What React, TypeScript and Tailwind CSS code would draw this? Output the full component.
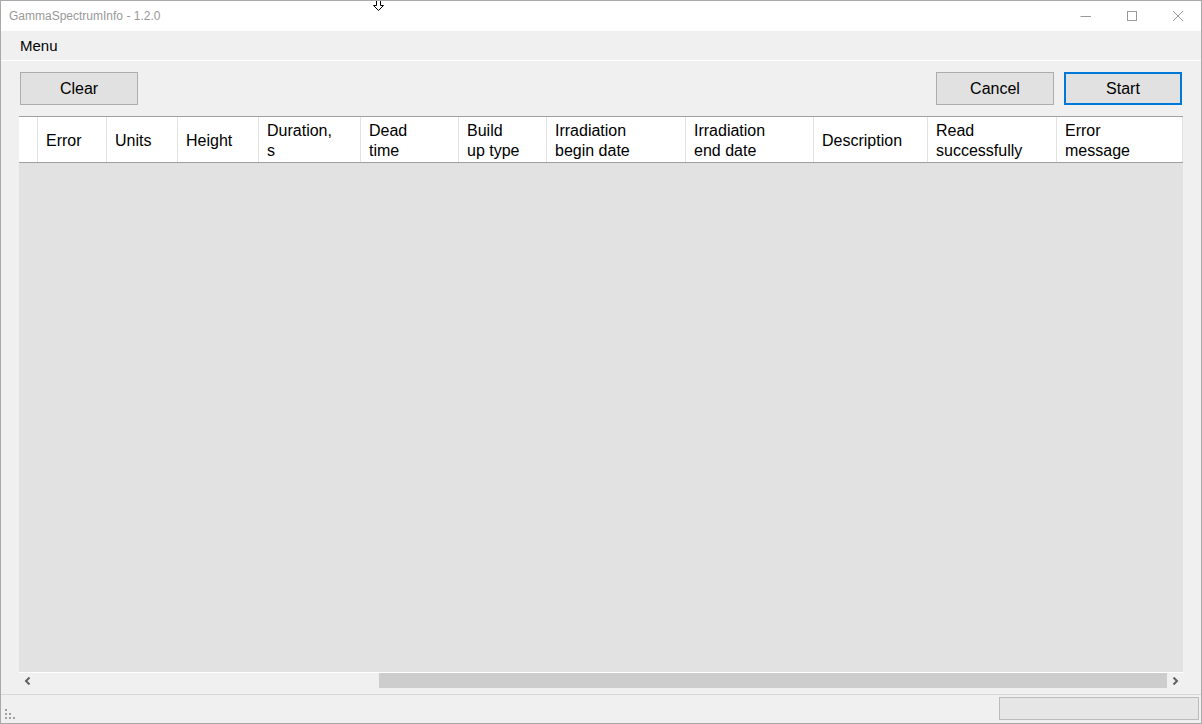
import React from "react";

const cols: { w: number; lines: string[] }[] = [
  { w: 69, lines: ["Error"] },
  { w: 71, lines: ["Units"] },
  { w: 81, lines: ["Height"] },
  { w: 102, lines: ["Duration,", "s"] },
  { w: 98, lines: ["Dead", "time"] },
  { w: 88, lines: ["Build", "up type"] },
  { w: 139, lines: ["Irradiation", "begin date"] },
  { w: 128, lines: ["Irradiation", "end date"] },
  { w: 114, lines: ["Description"] },
  { w: 129, lines: ["Read", "successfully"] },
  { w: 126, lines: ["Error", "message"] },
];

const font = { fontFamily: '"Liberation Sans", Arial, sans-serif' };

export default function App() {
  return (
    <div
      className="relative w-[1202px] h-[724px] border border-[#a9a9a9] bg-[#f0f0f0] flex flex-col overflow-hidden text-black"
      style={font}
    >
      {/* Title bar */}
      <div className="h-[30px] bg-white flex items-center shrink-0 relative">
        <span className="pl-[8px] text-[12px] text-[#999999] leading-none">GammaSpectrumInfo - 1.2.0</span>
        <div className="ml-auto flex items-center h-full">
          <div className="w-[46px] h-full flex items-center justify-center">
            <svg width="12" height="12" viewBox="0 0 12 12">
              <line x1="0.5" y1="6.5" x2="11" y2="6.5" stroke="#9a9a9a" strokeWidth="1" />
            </svg>
          </div>
          <div className="w-[46px] h-full flex items-center justify-center">
            <svg width="12" height="12" viewBox="0 0 12 12">
              <rect x="1.5" y="1.5" width="9" height="9" fill="none" stroke="#9a9a9a" strokeWidth="1" />
            </svg>
          </div>
          <div className="w-[46px] h-full flex items-center justify-center">
            <svg width="12" height="12" viewBox="0 0 12 12">
              <path d="M1 1 L11 11 M11 1 L1 11" stroke="#9a9a9a" strokeWidth="1" />
            </svg>
          </div>
        </div>
        {/* mouse cursor */}
        <svg className="absolute left-[371px] top-[-1px]" width="13" height="12" viewBox="0 0 13 12">
          <path
            d="M4.5 0.5 H8.5 V5.5 H11.5 L6.5 10.5 L1.5 5.5 H4.5 Z"
            fill="white"
            stroke="black"
            strokeWidth="1"
          />
        </svg>
      </div>

      {/* Menu strip */}
      <div className="h-[29px] bg-[#f0f0f0] flex items-center shrink-0">
        <span className="pl-[19px] text-[15px] leading-none">Menu</span>
      </div>
      <div className="h-px bg-white shrink-0" />

      {/* Body */}
      <div className="flex flex-col pt-[11px] pb-[5px] shrink-0 h-[633px]">
        <div className="flex items-center pl-[19px] pr-[19px] h-[33px] shrink-0">
          <button className="w-[118px] h-[33px] bg-[#e1e1e1] border border-[#adadad] text-[16px] flex items-center justify-center">
            Clear
          </button>
          <div className="flex-1" />
          <button className="w-[118px] h-[33px] bg-[#e1e1e1] border border-[#adadad] text-[16px] flex items-center justify-center">
            Cancel
          </button>
          <button className="ml-[10px] w-[118px] h-[33px] bg-[#e1e1e1] border-2 border-[#0078d7] text-[16px] flex items-center justify-center">
            Start
          </button>
        </div>

        {/* Grid */}
        <div className="mt-[11px] ml-[18px] w-[1164px] h-[573px] flex flex-col shrink-0">
          <div className="h-[47px] border-t border-b border-[#a0a0a0] bg-white flex shrink-0">
            <div className="w-[19px] h-full border-r border-[#e3e3e3] shrink-0" />
            {cols.map((c, i) => (
              <div
                key={i}
                className="h-full border-r border-[#e3e3e3] shrink-0 flex flex-col justify-center pl-[8px] pt-[2px] text-[16px] leading-[20px]"
                style={{ width: c.w }}
              >
                {c.lines.map((l, j) => (
                  <span key={j} className="whitespace-nowrap">
                    {l}
                  </span>
                ))}
              </div>
            ))}
          </div>
          <div className="flex-1 bg-[#e2e2e2]" />
          <div className="h-px bg-white shrink-0" />
          {/* Horizontal scrollbar */}
          <div className="h-[16px] bg-[#f0f0f0] flex shrink-0">
            <div className="w-[17px] h-full flex items-center justify-center">
              <svg width="8" height="8" viewBox="0 0 8 8">
                <path d="M5.5 0.5 L2 4 L5.5 7.5" fill="none" stroke="#606060" strokeWidth="2" />
              </svg>
            </div>
            <div className="flex-1 flex h-full pt-[0px] pb-[1px]">
              <div className="w-[343px]" />
              <div className="flex-1 bg-[#cdcdcd]" />
            </div>
            <div className="w-[16px] h-full flex items-center justify-center">
              <svg width="8" height="8" viewBox="0 0 8 8">
                <path d="M2.5 0.5 L6 4 L2.5 7.5" fill="none" stroke="#606060" strokeWidth="2" />
              </svg>
            </div>
          </div>
        </div>
      </div>

      {/* Status bar */}
      <div className="h-px bg-[#d7d7d7] shrink-0" />
      <div className="h-[28px] flex items-start shrink-0 relative">
        <svg className="absolute left-[4px] top-[14px]" width="12" height="12" viewBox="0 0 12 12">
          <rect x="0" y="0" width="2" height="2" fill="#a0a0a0" />
          <rect x="0" y="4" width="2" height="2" fill="#a0a0a0" />
          <rect x="4" y="4" width="2" height="2" fill="#a0a0a0" />
          <rect x="0" y="8" width="2" height="2" fill="#a0a0a0" />
          <rect x="4" y="8" width="2" height="2" fill="#a0a0a0" />
          <rect x="8" y="8" width="2" height="2" fill="#a0a0a0" />
        </svg>
        <div className="ml-auto mr-[2px] mt-[2px] w-[200px] h-[23px] bg-[#e6e6e6] border border-[#bcbcbc]" />
      </div>
    </div>
  );
}
